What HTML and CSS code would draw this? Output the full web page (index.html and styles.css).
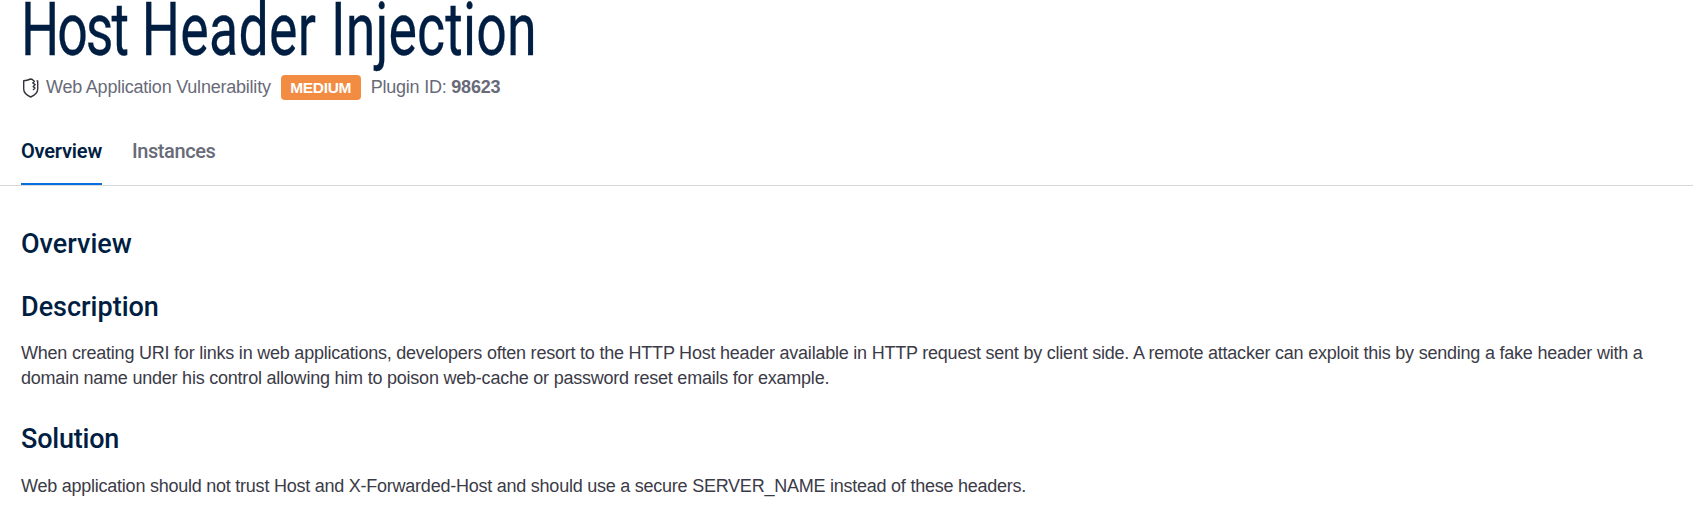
FILE: index.html
```html
<!DOCTYPE html>
<html lang="en">
<head>
<meta charset="utf-8">
<title>Host Header Injection</title>
<link rel="stylesheet" href="styles.css">
</head>
<body>
<header class="header">
  <h1 class="title"><span class="title-text"><span class="word-host">Host</span> <span class="word-header">Header</span> <span class="word-injection">Injection</span></span></h1>
  <div class="meta">
    <svg class="shield" viewBox="0 0 18 20" fill="none" stroke="#33333d" stroke-width="1.4" stroke-linejoin="round">
      <path d="M12 1.700 9.500 1 C7.500 2 5 2.700 2.700 2.800 V11 C2.700 14.800 5.500 17.200 9.700 19 C13.700 17.200 16.700 14.800 16.700 11 V3 L15.600 2.800"/>
      <path d="M11.200 1.500 13.400 3.200 11.800 5 14.200 6.600 12.200 8.600 14 10 12 12"/>
    </svg>
    <span>Web Application Vulnerability</span>
    <span class="badge">MEDIUM</span>
    <span>Plugin ID: <b>98623</b></span>
  </div>
</header>
<nav class="tabs">
  <a class="tab tab-active">Overview</a>
  <a class="tab">Instances</a>
</nav>
<main class="content">
  <h2 class="heading">Overview</h2>
  <h2 class="heading">Description</h2>
  <p class="text">When creating URI for links in web applications, developers often resort to the HTTP Host header available in HTTP request sent by client side. A remote attacker can exploit this by sending a fake header with a domain name under his control allowing him to poison web-cache or password reset emails for example.</p>
  <h2 class="heading heading-solution">Solution</h2>
  <p class="text text-solution">Web application should not trust Host and X-Forwarded-Host and should use a secure SERVER_NAME instead of these headers.</p>
</main>
</body>
</html>
```
FILE: styles.css
```css
body { margin: 0; background: #fff; color: #3b3b47; font: 18px/25px "Liberation Sans", Arial, sans-serif; letter-spacing: -.222px; }
.header { padding: 0 21px; }
.title { height: 75px; margin: 0; color: #001e42; font: 400 74.5px/59px Roboto, sans-serif; letter-spacing: 0; white-space: nowrap; }
.title-text { display: inline-block; transform: scaleX(.72); transform-origin: 0 50%; word-spacing: 2px; -webkit-text-stroke: .3px #001e42; }
.word-host { letter-spacing: -2.8px; }
.word-header { letter-spacing: .4px; }
.word-injection { letter-spacing: .2px; }
.meta { display: flex; align-items: center; height: 25px; color: #686a78; white-space: nowrap; }
.shield { width: 18px; height: 20px; margin-right: 7px; }
.badge { margin: 0 10px; width: 80px; text-align: center; border-radius: 4px; background: #f28c43; color: #fff; font-size: 15.5px; font-weight: 700; letter-spacing: -.3px; }
.tabs { display: flex; gap: 30px; height: 85px; padding: 0 21px; border-bottom: 1px solid #d8d8db; font: 500 20px/102px Roboto, sans-serif; letter-spacing: -.4px; color: #686a78; }
.tab { box-sizing: border-box; height: 85px; }
.tab-active { color: #001e42; border-bottom: 2px solid #0a6ddf; font-weight: 600; letter-spacing: -.2px; }
.content { padding: 42px 21px 0; }
.heading { margin: 0 0 31px; color: #001e42; font: 500 27px/32px Roboto, sans-serif; letter-spacing: 0; }
.heading-solution { margin-bottom: 19px; letter-spacing: -.2px; }
.text { margin: -13px 0 32px; }
.text-solution { margin: 0; letter-spacing: -.24px; }
```
